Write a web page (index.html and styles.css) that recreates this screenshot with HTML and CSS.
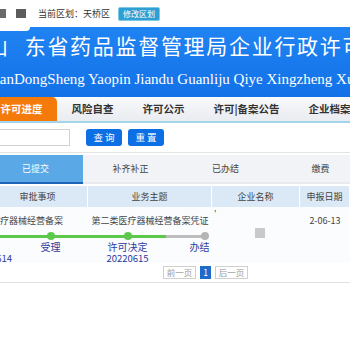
FILE: index.html
```html
<!DOCTYPE html>
<html lang="zh-CN">
<head>
<meta charset="utf-8">
<title>山东省药品监督管理局企业行政许可</title>
<link rel="stylesheet" href="styles.css">
</head>
<body>
<div class="page">
  <div class="topbar">
    <span class="sq sq1"></span>
    <span class="sq sq2"></span>
    <span class="region">当前区划：天桥区</span>
    <span class="change-btn">修改区划</span>
  </div>
  <div class="header">
    <div class="title"><span class="first">山</span>东省药品监督管理局企业行政许可</div>
    <div class="subtitle">ShanDongSheng Yaopin Jiandu Guanliju Qiye Xingzheng Xuke</div>
  </div>
  <div class="nav">
    <span class="nav-item active">许可进度</span>
    <span class="nav-item">风险自查</span>
    <span class="nav-item">许可公示</span>
    <span class="nav-item">许可|备案公告</span>
    <span class="nav-item">企业档案</span>
  </div>
  <div class="search">
    <input class="search-input" type="text">
    <button class="btn first-btn">查 询</button>
    <button class="btn">重 置</button>
  </div>
  <div class="tabs">
    <span class="tab active">已提交</span>
    <span class="tab">补齐补正</span>
    <span class="tab">已办结</span>
    <span class="tab">缴费</span>
  </div>
  <div class="table">
    <div class="thead">
      <span class="th">审批事项</span>
      <span class="th">业务主题</span>
      <span class="th">企业名称</span>
      <span class="th">申报日期</span>
      <span class="th"></span>
    </div>
    <div class="trow">
      <span class="td td-item">医疗器械经营备案</span>
      <span class="td td-subject">第二类医疗器械经营备案凭证</span>
      <span class="td td-company"><span class="tick">'</span><span class="gray-box"></span></span>
      <span class="td td-date">2-06-13</span>
      <span class="td td-extra"></span>
      <div class="progress">
        <div class="step done first-step">
          <span class="dot"></span>
          <span class="step-label">申请</span>
          <span class="step-date right">20220614</span>
        </div>
        <div class="step done">
          <span class="dot"></span>
          <span class="step-label">受理</span>
        </div>
        <div class="step done">
          <span class="dot"></span>
          <span class="step-label">许可决定</span>
          <span class="step-date">20220615</span>
        </div>
        <div class="step last">
          <span class="dot gray"></span>
          <span class="step-label shift">办结</span>
        </div>
      </div>
    </div>
    <div class="pager">
      <span class="pg">前一页</span>
      <span class="pg cur">1</span>
      <span class="pg">后一页</span>
    </div>
  </div>
</div>
</body>
</html>
```
FILE: styles.css
```css
html, body {
  margin: 0;
  padding: 0;
  background: #fff;
}
body {
  width: 350px;
  height: 350px;
  overflow: hidden;
  font-family: "Noto Sans CJK SC", "Liberation Sans", sans-serif;
}
.page {
  width: 350px;
  overflow: hidden;
}
.topbar {
  height: 27px;
  display: flex;
  align-items: center;
  white-space: nowrap;
}
.sq {
  width: 10px;
  height: 9px;
  background: #5c5c5c;
  flex: none;
}
.sq1 {
  margin-left: -4px;
  background: #6a6a6a;
}
.sq2 {
  margin-left: 10px;
}
.region {
  margin-left: 12px;
  font-size: 9px;
  color: #333;
  line-height: 12px;
}
.change-btn {
  margin-left: 8px;
  font-size: 8px;
  line-height: 12px;
  height: 12px;
  padding: 0 4px;
  color: #fff;
  background: #2e9fd2;
  border: 1px solid #7cc8e6;
  border-radius: 2px;
}
.header {
  height: 70px;
  position: relative;
  overflow: hidden;
  color: #fff;
  background: linear-gradient(#2083f2, #1271e8);
  white-space: nowrap;
}
.header::before {
  content: "";
  position: absolute;
  left: 0;
  top: 0;
  width: 30px;
  height: 4px;
  background: #fff;
  border-bottom-right-radius: 6px;
}
.title {
  font-size: 21px;
  line-height: 28px;
  padding-top: 4px;
  letter-spacing: 1.7px;
  margin-left: -13px;
}
.title .first {
  margin-right: 15px;
}
.subtitle {
  margin-top: 12px;
  margin-left: -16px;
  font-family: "Liberation Serif", serif;
  font-size: 15px;
  line-height: 16px;
}
.nav {
  height: 24px;
  display: flex;
  margin-left: -14px;
  background: linear-gradient(#f8f9fb, #e9ecf0);
  border-bottom: 2px solid #a3d4ec;
  white-space: nowrap;
}
.nav-item {
  padding: 0 14.5px;
  line-height: 24px;
  font-size: 10.5px;
  font-weight: bold;
  color: #333;
}
.nav-item.active {
  background: #f57a0c;
  color: #fff;
  border-top-right-radius: 5px;
}
.search {
  height: 29px;
  display: flex;
  align-items: center;
  border-bottom: 1px solid #e3e3e3;
}
.search-input {
  width: 90px;
  height: 17px;
  margin: 0 0 0 -20px;
  box-sizing: border-box;
  border: 1px solid #d2d2d2;
  background: #fff;
  padding: 0;
}
.btn {
  height: 17px;
  width: 36px;
  padding: 0;
  margin-left: 6px;
  border: none;
  border-radius: 3px;
  background: #0c6fe4;
  color: #fff;
  font-family: "Noto Sans CJK SC", sans-serif;
  font-size: 9.5px;
  line-height: 17px;
}
.btn.first-btn {
  margin-left: 16px;
}
.tabs {
  margin-top: 2px;
  margin-left: -12px;
  display: flex;
  white-space: nowrap;
}
.tab {
  width: 95px;
  flex: none;
  height: 27px;
  line-height: 27px;
  text-align: center;
  font-size: 9px;
  color: #444;
  background: #f1f3f6;
  border-bottom: 2px solid #e6eaef;
}
.tab.active {
  background: #5aa8e6;
  color: #fff;
  border-bottom-color: #1d63b8;
}
.table {
  margin-top: 2px;
  margin-left: -12px;
  width: 435px;
}
.thead, .trow {
  display: grid;
  grid-template-columns: 100px 124px 88px 50px 73px;
}
.thead {
  background: #dbe9f7;
  height: 21px;
}
.th {
  font-size: 9px;
  line-height: 21px;
  color: #444;
  text-align: center;
  border-right: 1px solid #fff;
}
.trow {
  background: #fafcfe;
  grid-template-rows: auto auto;
}
.td {
  font-size: 9px;
  line-height: 14px;
  color: #444;
  margin-top: 7px;
  white-space: nowrap;
}
.td-item {
  padding-left: 3px;
}
.td-subject, .td-date {
  text-align: center;
}
.td-company {
  grid-row: 1 / 3;
  grid-column: 3;
  margin-top: 0;
  display: flex;
  flex-direction: column;
}
.tick {
  font-size: 9px;
  line-height: 8px;
  color: #555;
  padding: 4px 0 0 2px;
}
.gray-box {
  width: 10px;
  height: 10px;
  background: #c9c9c9;
  margin: 9px 0 0 43px;
}
.td-date {
  grid-column: 4;
}
.td-extra {
  grid-column: 5;
}
.progress {
  grid-column: 1 / 3;
  grid-row: 2;
  display: flex;
  margin-left: -53px;
}
.step {
  width: 77px;
  flex: none;
  display: flex;
  flex-direction: column;
  align-items: center;
}
.step.done {
  background: linear-gradient(#5cc94c, #5cc94c) no-repeat 0 6.5px / 100% 3px;
}
.step.last {
  background: linear-gradient(#bdbdbd, #bdbdbd) no-repeat 0 6.5px / 50% 3px;
}
.dot {
  width: 8px;
  height: 8px;
  margin-top: 4px;
  border-radius: 50%;
  background: #5cc94c;
}
.dot.gray {
  background: #b5b5b5;
}
.step-label {
  margin-top: 1px;
  font-size: 10px;
  line-height: 12px;
  color: #2d3a9c;
  white-space: nowrap;
}
.step-label.shift {
  margin-right: 10px;
}
.step-date {
  font-size: 9.5px;
  line-height: 10px;
  color: #2d3a9c;
  white-space: nowrap;
}
.step-date.right {
  align-self: flex-end;
}
.pager {
  display: flex;
  justify-content: center;
  gap: 4px;
  padding: 3px 0;
  border-bottom: 1px solid #e2e2e2;
}
.pg {
  height: 11px;
  line-height: 11px;
  padding: 0 3px;
  border: 1px solid #cfcfcf;
  font-size: 8.5px;
  color: #999;
  background: #fff;
}
.pg.cur {
  background: #1f6bc9;
  border-color: #1f6bc9;
  color: #fff;
  padding: 0 2px;
}
```
